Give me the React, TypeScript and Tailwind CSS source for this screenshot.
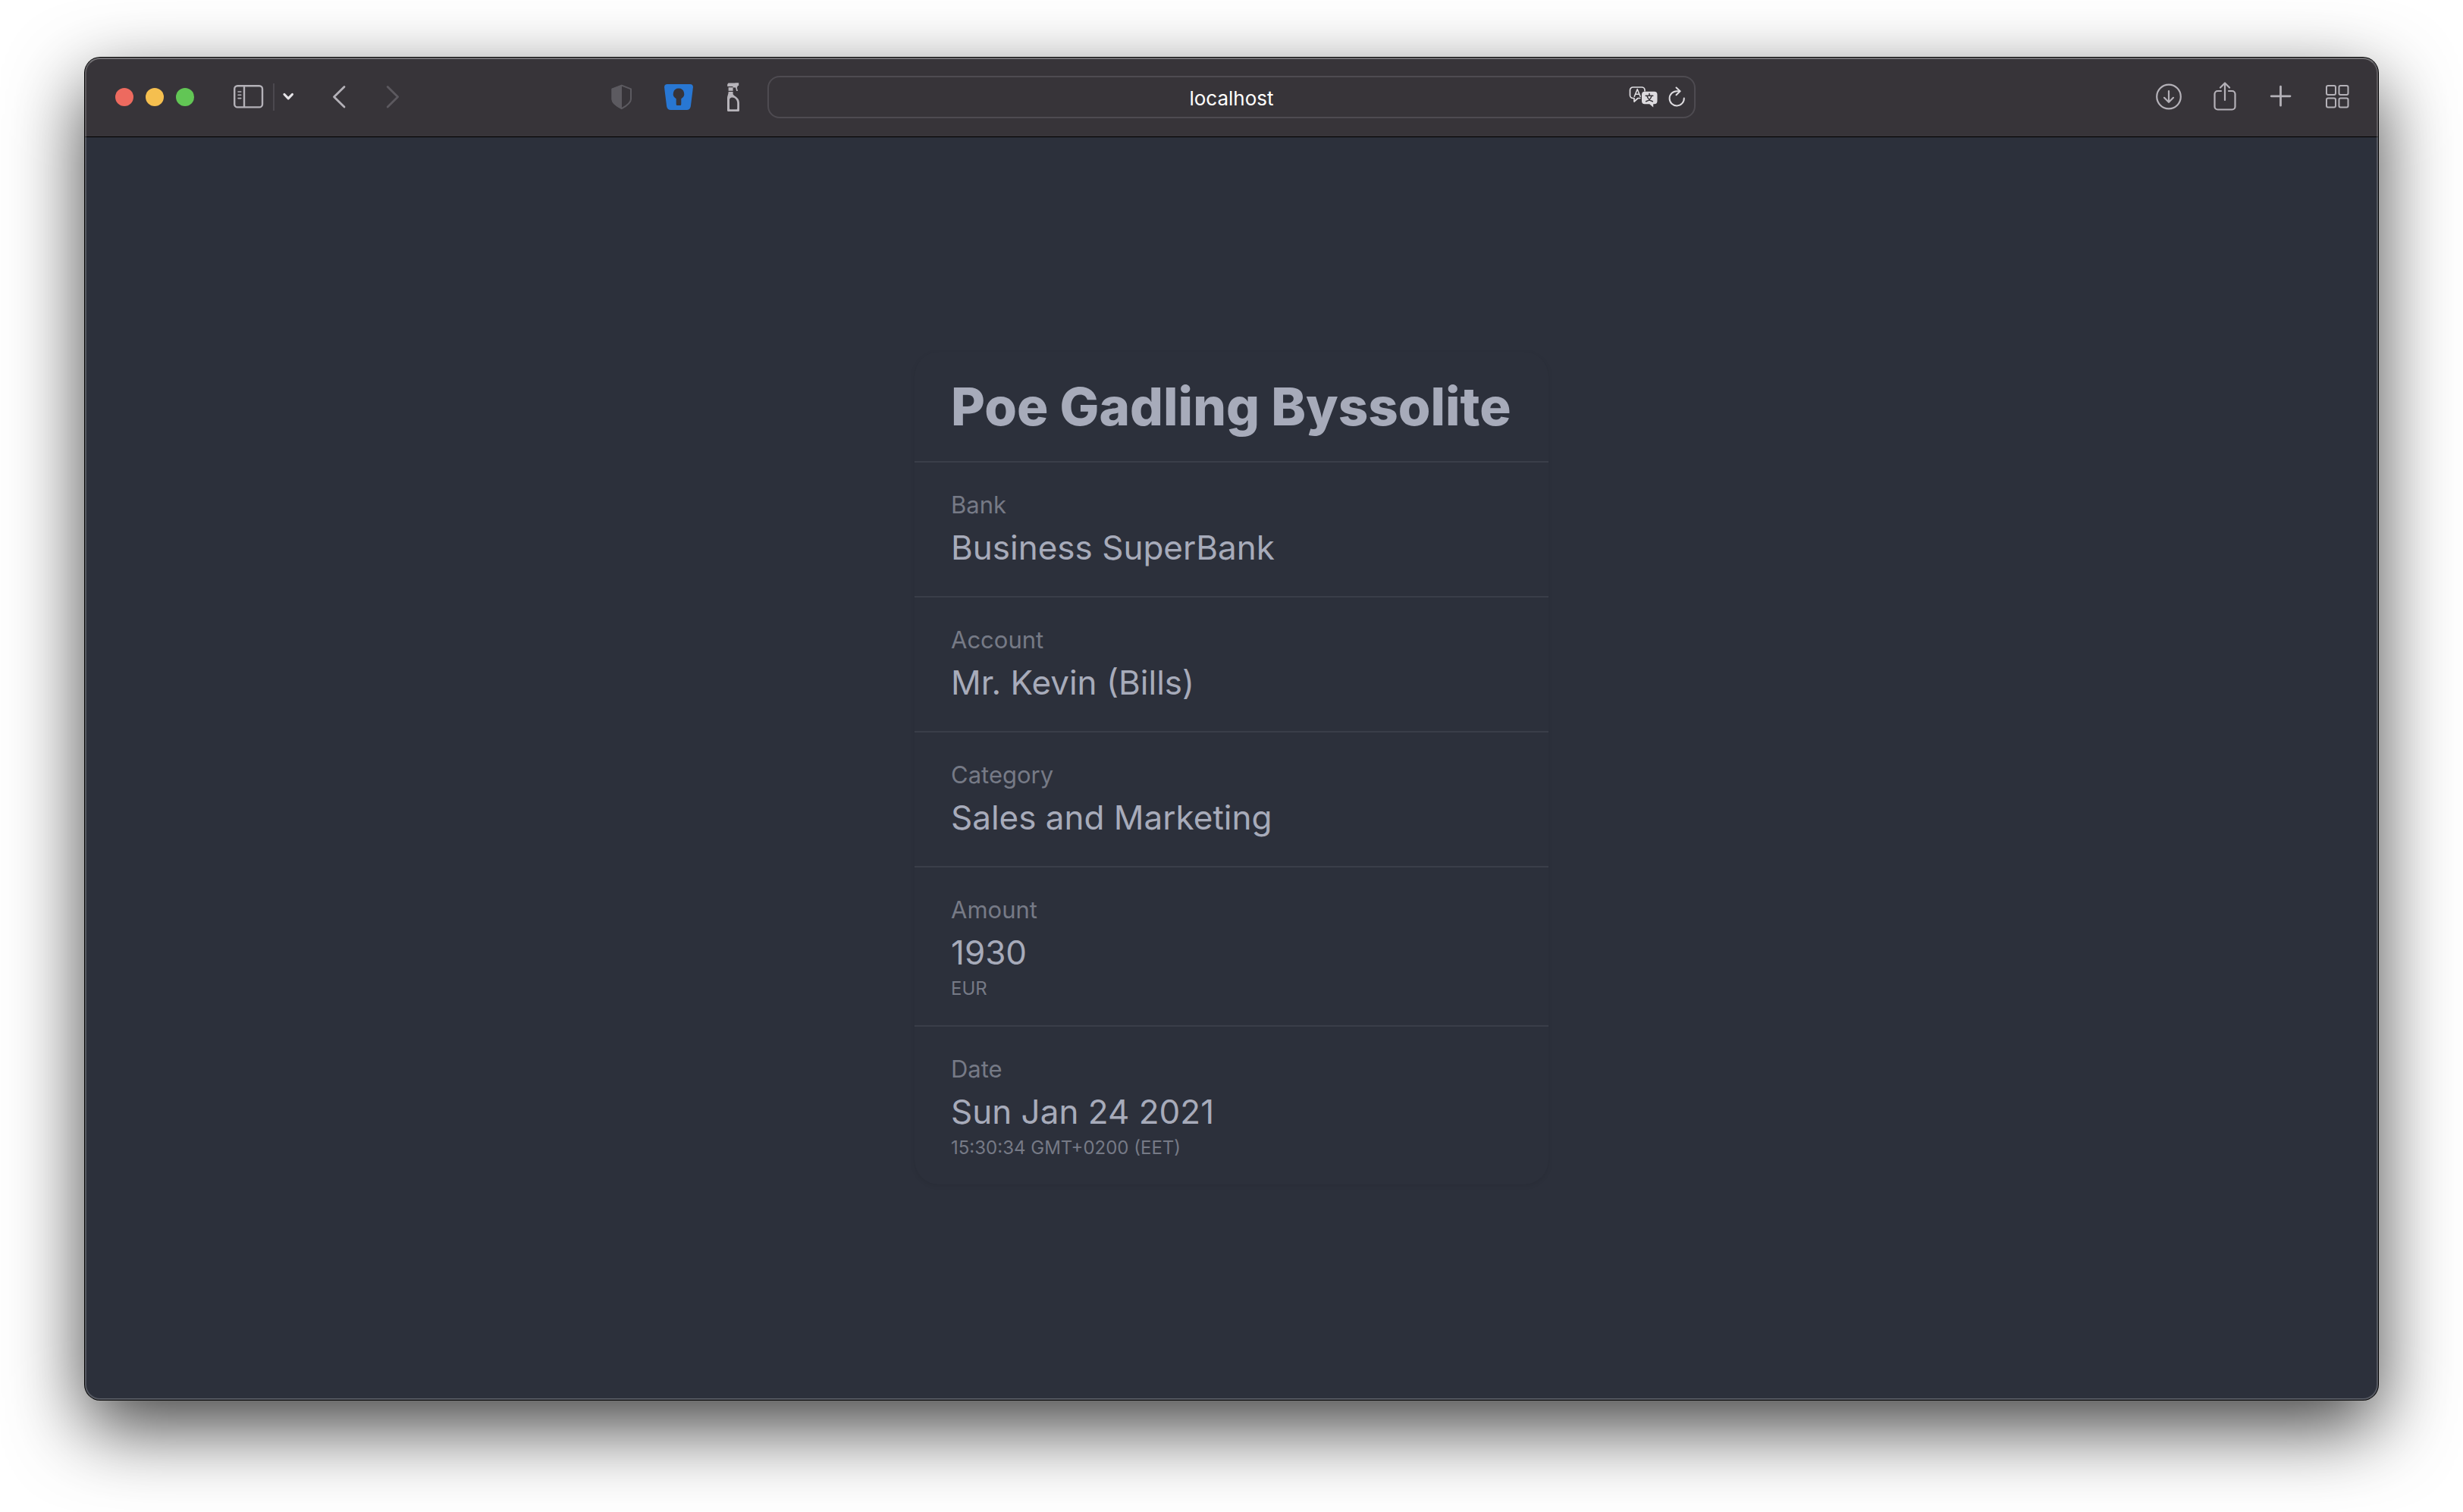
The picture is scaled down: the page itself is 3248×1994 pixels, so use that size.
import React from "react";

type Stat = { title: string; value: string; desc?: string };

const stats: Stat[] = [
  { title: "Bank", value: "Business SuperBank" },
  { title: "Account", value: "Mr. Kevin (Bills)" },
  { title: "Category", value: "Sales and Marketing" },
  { title: "Amount", value: "1930", desc: "EUR" },
  { title: "Date", value: "Sun Jan 24 2021", desc: "15:30:34 GMT+0200 (EET)" },
];

function IconButton({ label, className = "", children }: { label: string; className?: string; children: React.ReactNode }) {
  return (
    <button type="button" aria-label={label} className={`shrink-0 ${className}`}>
      {children}
    </button>
  );
}

function WindowControls() {
  return (
    <div className="flex gap-4">
      <button type="button" aria-label="Close" className="size-6 rounded-full bg-[#ed6a5f]" />
      <button type="button" aria-label="Minimize" className="size-6 rounded-full bg-[#f5bf4f]" />
      <button type="button" aria-label="Zoom" className="size-6 rounded-full bg-[#62c655]" />
    </div>
  );
}

function LeftTools() {
  return (
    <div className="flex min-w-0 items-center pr-9 pl-10 text-[#b4b1b8]">
      <WindowControls />
      <IconButton label="Sidebar" className="ml-13">
        <svg width="40" height="32" viewBox="0 0 40 32" fill="none" stroke="currentColor" strokeWidth="2.4">
          <rect x="1.2" y="1.2" width="36.8" height="28.2" rx="4" />
          <path d="M14 1.5v28" />
          <path d="M6 9h3.8M6 13.2h3.8M6 17.6h3.8" strokeWidth="1.6" strokeLinecap="round" />
        </svg>
      </IconButton>
      <div className="ml-3 h-9 w-0.5 bg-[#4b484e]" />
      <IconButton label="Tab groups" className="ml-2.5">
        <svg width="16" height="12" viewBox="0 0 16 12" fill="none" stroke="#e6e4e8" strokeWidth="3.2" strokeLinecap="round" strokeLinejoin="round">
          <path d="M3 2.5l5.2 5.4 5.2-5.4" />
        </svg>
      </IconButton>
      <IconButton label="Back" className="ml-12">
        <svg width="20" height="32" viewBox="0 0 20 32" fill="none" stroke="currentColor" strokeWidth="2.8" strokeLinecap="round" strokeLinejoin="round">
          <path d="M18 2.5L4.5 15.8 18 29" />
        </svg>
      </IconButton>
      <IconButton label="Forward" className="ml-13">
        <svg width="20" height="32" viewBox="0 0 20 32" fill="none" stroke="#5c595f" strokeWidth="2.8" strokeLinecap="round" strokeLinejoin="round">
          <path d="M3.2 2.5L16.6 15.8 3.2 29" />
        </svg>
      </IconButton>
      <div className="ml-auto flex items-center">
        <IconButton label="Privacy report">
          <svg width="28" height="34" viewBox="0 0 28 34">
            <path d="M13.8 1.6L26 6.4v13.4c0 5-5.2 8.600-12.200 12.400C6.800 28.400 1.400 24.800 1.400 19.800V6.400z" fill="none" stroke="#5c5a60" strokeWidth="2" strokeLinejoin="round" />
            <path d="M14 1L.6 6v14c0 5.400 5.600 9 13.400 13z" fill="#5c5a60" />
          </svg>
        </IconButton>
        <IconButton label="Password manager" className="ml-10.5">
          <svg width="38" height="34" viewBox="0 0 38 34">
            <path d="M4 0h30c2.800 0 4.200 1.800 3.900 4.400l-3 24.600c-.4 3-2.300 5-5.400 5H8.500c-3.100 0-5-2-5.400-5L.1 4.400C-.2 1.800 1.200 0 4 0z" fill="#2877d3" />
            <path d="M19 5.600a7.200 7.200 0 0 1 3.300 13.600V26.500q0 1.500-1.500 1.500h-3.600q-1.500 0-1.500-1.500V19.200A7.200 7.200 0 0 1 19 5.600z" fill="#373439" />
          </svg>
        </IconButton>
        <IconButton label="Clean page" className="ml-11">
          <svg width="18" height="38" viewBox="0 0 18 38">
            <path d="M2.500.500h9v-.2h4.700v3.600h-1.400c-.2 1.500-.6 2 -1 2.600l1.200 4.500h-1.800l-1.200-4.600H8.500V5H1.200V2.200z" fill="#b7b4ba" />
            <path d="M2.600 6.200h6v4.600h-6z" fill="#b7b4ba" />
            <path fillRule="evenodd" d="M2.600 12h6v3c0 2.200 8.400 4 8.400 11.500v10c0 .9-.5 1.500-1.500 1.500h-13C1.500 38 1 37.400 1 36.500V21c0-4 1.600-5 1.600-9zM5 20.500c-.6.500-1 1.300-1 2.500v10.800c0 1 .5 1.500 1.400 1.500h7.300c1 0 1.500-.5 1.500-1.500v-7c0-4-3-7.300-6.700-7.300-1 0-1.900.4-2.500 1z" fill="#b7b4ba" />
          </svg>
        </IconButton>
      </div>
    </div>
  );
}

function AddressBar() {
  return (
    <div className="relative h-14 rounded-2xl border-2 border-[#4e4b51]">
      <input
        type="text"
        aria-label="Address"
        defaultValue="localhost"
        className="size-full bg-transparent pt-0.5 text-center text-[26px] leading-8 text-white outline-none"
      />
      <div className="absolute inset-y-0 right-2.5 flex items-center gap-3.5 text-[#dddbdf]">
        <IconButton label="Translate">
          <svg width="38" height="28" viewBox="0 0 38 28" fill="none">
            <path d="M15.500 15.500H12L7 20v-4.500H5.500a4 4 0 0 1-4-4V5a4 4 0 0 1 4-4H17a4 4 0 0 1 4 4v1.500" stroke="currentColor" strokeWidth="1.700" strokeLinejoin="round" />
            <path d="M7.300 13.200L11.200 3.700l3.900 9.500M8.800 10.200h4.800" stroke="currentColor" strokeWidth="1.600" strokeLinejoin="round" strokeLinecap="round" />
            <path d="M21 6.800h12.500a4 4 0 0 1 4 4v8.400a4 4 0 0 1-4 4H32.200V27.500l-5-4.300H21a4 4 0 0 1-4-4v-8.400a4 4 0 0 1 4-4z" fill="currentColor" />
            <path d="M22.200 12.200h9.600M27 9.500v2.500M30 12.500c-.8 3-3.500 6-7.300 7.300M24 12.500c.8 3 3.500 6 7.300 7.300" stroke="#373439" strokeWidth="1.500" strokeLinecap="round" />
          </svg>
        </IconButton>
        <IconButton label="Reload">
          <svg width="24" height="28" viewBox="0 0 24 28" fill="none" stroke="currentColor" strokeWidth="2" strokeLinecap="round" strokeLinejoin="round">
            <path d="M20.800 15.500A9.600 9.600 0 1 1 11.200 6.200h4.200" />
            <path d="M10.500 1.500l5 4.700-5 5" />
          </svg>
        </IconButton>
      </div>
    </div>
  );
}

function RightTools() {
  return (
    <div className="flex items-center justify-end pr-9 text-[#b4b1b8]">
      <IconButton label="Downloads">
        <svg width="36" height="36" viewBox="0 0 36 36" fill="none" stroke="currentColor" strokeWidth="2.200" strokeLinecap="round" strokeLinejoin="round">
          <circle cx="18" cy="17.500" r="15.800" />
          <path d="M18 10v14.500M12 18.800l6 6 6-6" />
        </svg>
      </IconButton>
      <IconButton label="Share" className="ml-10">
        <svg width="32" height="40" viewBox="0 0 32 40" fill="none" stroke="currentColor" strokeWidth="2.200" strokeLinecap="round" strokeLinejoin="round">
          <path d="M11 12H6.500a4 4 0 0 0-4 4v16.500a4 4 0 0 0 4 4h19a4 4 0 0 0 4-4V16a4 4 0 0 0-4-4H21" />
          <path d="M16 24V1.800M10 7.500l6-6 6 6" />
        </svg>
      </IconButton>
      <IconButton label="New tab" className="ml-10">
        <svg width="32" height="32" viewBox="0 0 32 32" fill="none" stroke="currentColor" strokeWidth="2.800" strokeLinecap="round">
          <path d="M17.500 2.200v25M5.200 14.800h24.800" />
        </svg>
      </IconButton>
      <IconButton label="Tab overview" className="ml-10.5">
        <svg width="36" height="32" viewBox="0 0 36 32" fill="none" stroke="currentColor" strokeWidth="2">
          <rect x="4" y="1" width="12" height="12" rx="2" />
          <rect x="20.500" y="1" width="12" height="12" rx="2" />
          <rect x="4" y="17.500" width="12" height="12" rx="2" />
          <rect x="20.500" y="17.500" width="12" height="12" rx="2" />
        </svg>
      </IconButton>
    </div>
  );
}

function TransactionCard() {
  return (
    <article className="w-[836px] divide-y-2 divide-[#3a3e49] rounded-4xl bg-[#2c303b] shadow-[0_2px_6px_rgba(0,0,0,0.08)]">
      <h1 className="px-12 py-8 text-[69px] leading-20 font-extrabold whitespace-nowrap text-[#a7abba]">Poe Gadling Byssolite</h1>
      {stats.map((s) => (
        <section key={s.title} className="px-12 py-8 whitespace-nowrap">
          <h2 className="text-[31px] leading-12 text-[#767a86]">{s.title}</h2>
          <p className="text-[44px] leading-16 text-[#a7abba]">{s.value}</p>
          {s.desc && <p className="text-2xl leading-8 text-[#767a86]">{s.desc}</p>}
        </section>
      ))}
    </article>
  );
}

export default function App() {
  return (
    <div className="flex min-h-screen flex-col bg-white px-28 pt-19 pb-37 font-['Inter','Liberation_Sans',sans-serif]">
      <div className="relative flex flex-1 flex-col rounded-[20px] bg-[#2c303b] shadow-[0_0_0_1px_#000,0_36px_100px_rgba(0,0,0,0.75)]">
        <header className="relative grid h-26 grid-cols-[1fr_minmax(0,1224px)_1fr] items-center rounded-t-[20px] bg-[#373439] shadow-[0_1px_0_#000]">
          <LeftTools />
          <AddressBar />
          <RightTools />
        </header>
        <main className="flex flex-1 items-center justify-center">
          <TransactionCard />
        </main>
        <div className="pointer-events-none absolute inset-0 rounded-[20px] border-2 border-white/20 border-t-white/30" />
      </div>
    </div>
  );
}
